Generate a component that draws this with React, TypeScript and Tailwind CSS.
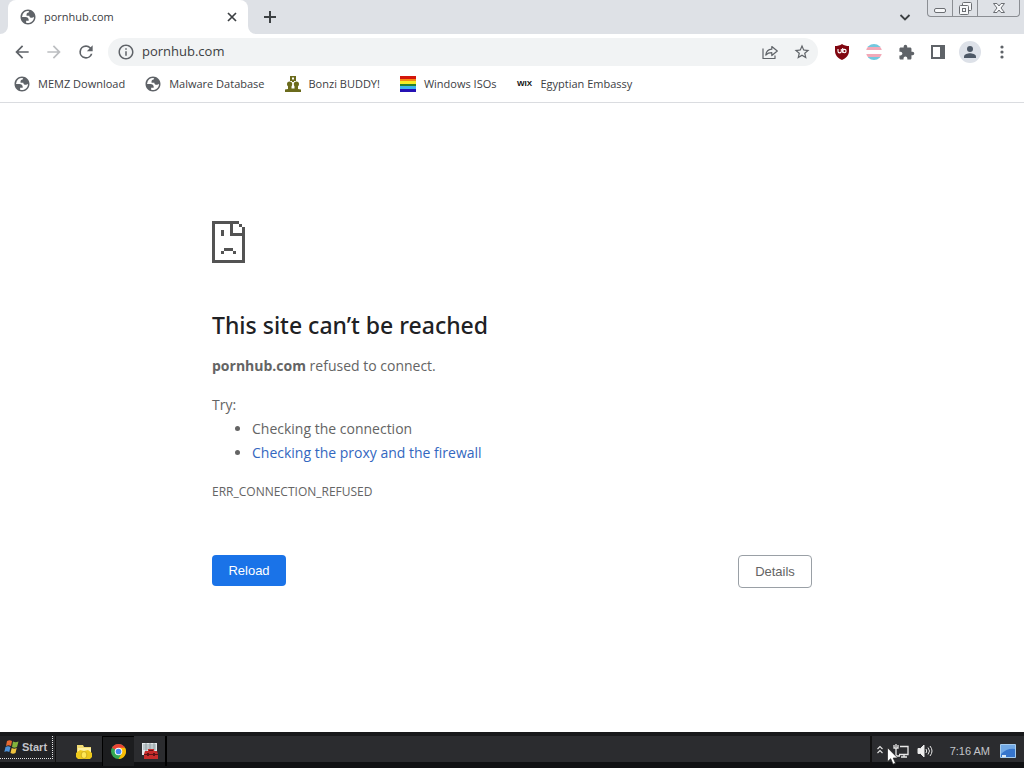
import type { ReactNode } from "react";

const GLOBE =
  "M12 2C6.480 2 2 6.480 2 12s4.480 10 10 10 10-4.480 10-10S17.520 2 12 2zM4 12h4.400c3.407.022 4.922 1.730 4.543 5.127H9.488v2.470a8.004 8.004 0 0 0 10.498-8.083C19.327 12.504 18.332 13 17 13c-2.137 0-3.206-.916-3.206-2.750h-3.748c-.274-2.728.683-4.092 2.870-4.092 0-.975.327-1.597.811-1.970A8.004 8.004 0 0 0 4 12z";

function Icon({ d, className }: { d: string; className?: string }) {
  return (
    <svg viewBox="0 0 24 24" className={className ?? "size-5"} fill="currentColor" aria-hidden="true">
      <path d={d} fillRule="evenodd" />
    </svg>
  );
}

function Globe() {
  return <Icon d={GLOBE} className="-mx-px size-[18px] shrink-0 text-[#5f6368]" />;
}

function ToolButton({ label, children, className }: { label: string; children: ReactNode; className?: string }) {
  return (
    <button type="button" aria-label={label} className={`flex size-8 shrink-0 items-center justify-center rounded-full ${className ?? "text-[#5f6368]"}`}>
      {children}
    </button>
  );
}

function Tab() {
  return (
    <div className="relative ml-2 flex h-[34px] w-60 items-center rounded-t-lg bg-white pr-2 pl-3">
      <svg viewBox="0 0 8 8" className="absolute bottom-0 -left-2 size-2" fill="white"><path d="M8 0v8H0a8 8 0 0 0 8-8z" /></svg>
      <svg viewBox="0 0 8 8" className="absolute -right-2 bottom-0 size-2" fill="white"><path d="M0 0v8h8a8 8 0 0 1-8-8z" /></svg>
      <div className="flex flex-1 items-center gap-2">
        <Globe />
        <span className="text-[11px] text-[#3c4043]">pornhub.com</span>
      </div>
      <button type="button" aria-label="Close tab" className="flex size-4 items-center justify-center text-[#3c4043]">
        <svg viewBox="0 0 16 16" className="size-4" stroke="currentColor" strokeWidth="1.700"><path d="M4 4l8 8M12 4l-8 8" /></svg>
      </button>
    </div>
  );
}

function TabStrip() {
  return (
    <header className="flex h-[34px] bg-[#dee1e6]">
      <Tab />
      <button type="button" aria-label="New tab" className="ml-2 flex w-7 items-center justify-center text-[#3c4043]">
        <svg viewBox="0 0 16 16" className="size-4" stroke="currentColor" strokeWidth="2"><path d="M8 2v12M2 8h12" /></svg>
      </button>
      <button type="button" aria-label="Search tabs" className="ml-auto flex w-7 items-center justify-center text-[#3c4043]">
        <svg viewBox="0 0 16 16" className="size-4" fill="none" stroke="currentColor" strokeWidth="1.800"><path d="M3.500 6L8 10.500 12.500 6" /></svg>
      </button>
      <div className="mr-1 ml-2 flex h-[17px] divide-x divide-[#8b8e93] rounded-b border border-t-0 border-[#8b8e93] text-[#6b6e73]">
        <button type="button" aria-label="Minimize" className="flex w-[25px] justify-center">
          <svg viewBox="0 0 24 16" className="h-4 w-6" fill="#f7f8fa" stroke="currentColor"><rect x="6.500" y="8.500" width="11" height="4" rx="1.500" /></svg>
        </button>
        <button type="button" aria-label="Restore" className="flex w-[25px] justify-center">
          <svg viewBox="0 0 24 16" className="h-4 w-6" fill="#f7f8fa" stroke="currentColor">
            <rect x="9.500" y="2.500" width="9" height="8" rx="1" /><rect x="6.500" y="5.500" width="9" height="9" rx="1" /><rect x="9.500" y="8.500" width="3" height="3" />
          </svg>
        </button>
        <button type="button" aria-label="Close" className="flex w-[41px] justify-center">
          <svg viewBox="0 0 24 16" className="h-4 w-6" fill="#f7f8fa" stroke="currentColor">
            <path d="M6.500 3.500h3.500l2 2.500 2-2.500h3.500l-3.500 4.500 3.500 4.500h-3.500l-2-2.500-2 2.500H6.500L10 8z" />
          </svg>
        </button>
      </div>
    </header>
  );
}

function Toolbar() {
  return (
    <div className="flex h-9 items-center bg-white px-1.5">
      <ToolButton label="Back"><Icon d="M20 11H7.830l5.590-5.590L12 4l-8 8 8 8 1.410-1.410L7.830 13H20v-2z" /></ToolButton>
      <ToolButton label="Forward" className="text-[#bcbec1]"><Icon d="M12 4l-1.410 1.410L16.170 11H4v2h12.170l-5.580 5.590L12 20l8-8z" /></ToolButton>
      <ToolButton label="Reload page"><Icon d="M17.650 6.350A7.958 7.958 0 0 0 12 4a8 8 0 1 0 7.730 10h-2.080A6 6 0 1 1 12 6c1.660 0 3.140.69 4.220 1.780L13 11h7V4l-2.350 2.350z" /></ToolButton>
      <div className="ml-1.5 flex h-7 flex-1 items-center rounded-full bg-[#f1f3f4] pl-[9px]">
        <Icon d="M11 7h2v2h-2zm0 4h2v6h-2zm1-9C6.480 2 2 6.480 2 12s4.480 10 10 10 10-4.480 10-10S17.520 2 12 2zm0 18c-4.410 0-8-3.590-8-8s3.590-8 8-8 8 3.590 8 8-3.590 8-8 8z" className="size-[18px] shrink-0 text-[#5f6368]" />
        <input aria-label="Address and search bar" defaultValue="pornhub.com" className="ml-[5px] w-full min-w-0 flex-1 bg-transparent px-0.5 text-[13px] text-[#3c4043] outline-none" />
        <ToolButton label="Share this page">
          <svg viewBox="0 0 18 18" className="size-[18px]" fill="none" stroke="currentColor" strokeWidth="1.200" strokeLinejoin="round">
            <path d="M2 5.500v10h12V12.500M4.800 12c.4-3.600 2.500-5.600 6-5.800V3.500L16.300 8l-5.500 4.500V9.700c-2.600 0-4.400.6-6 2.300z" />
          </svg>
        </ToolButton>
        <ToolButton label="Bookmark this page">
          <Icon className="size-[18px]" d="M22 9.240l-7.190-.62L12 2 9.190 8.630 2 9.240l5.460 4.730L5.820 21 12 17.270 18.180 21l-1.630-7.030L22 9.240zM12 15.400l-3.760 2.270 1-4.280-3.320-2.880 4.380-.38L12 6.100l1.710 4.040 4.380.38-3.320 2.880 1 4.280L12 15.400z" />
        </ToolButton>
      </div>
      <div className="ml-2 flex">
        <ToolButton label="uBlock Origin">
          <svg viewBox="0 0 16 16" className="size-4">
            <path d="M8 0c2 1.500 4.500 2 7 2v5c0 4.500-3 7-7 9-4-2-7-4.500-7-9V2c2.500 0 5-.5 7-2z" fill="#800610" />
            <path d="M4 5v2.200a1.600 1.600 0 0 0 3.300 0V5M8.700 4v4.800" fill="none" stroke="#fff" strokeWidth="1.100" />
            <circle cx="10.400" cy="7.100" r="1.700" fill="none" stroke="#fff" strokeWidth="1.100" />
          </svg>
        </ToolButton>
        <ToolButton label="Flag extension">
          <span className="flex size-4 flex-col overflow-hidden rounded-full">
            <span className="flex-1 bg-[#72c8de]" /><span className="flex-1 bg-[#f2a9b8]" /><span className="flex-1 bg-white" /><span className="flex-1 bg-[#f2a9b8]" /><span className="flex-1 bg-[#72c8de]" />
          </span>
        </ToolButton>
        <ToolButton label="Extensions">
          <Icon className="size-[17px]" d="M20.500 11H19V7c0-1.100-.9-2-2-2h-4V3.500a2.500 2.500 0 0 0-5 0V5H4c-1.100 0-1.990.9-1.990 2v3.800H3.500c1.490 0 2.700 1.210 2.700 2.700s-1.210 2.700-2.700 2.700H2V20c0 1.100.9 2 2 2h3.800v-1.500c0-1.490 1.210-2.700 2.700-2.700s2.700 1.210 2.700 2.700V22H17c1.100 0 2-.9 2-2v-4h1.500a2.500 2.500 0 0 0 0-5z" />
        </ToolButton>
        <ToolButton label="Side panel">
          <svg viewBox="0 0 14 14" className="size-3.5" fill="currentColor"><path fillRule="evenodd" d="M0 0h14v14H0zM2 2v10h7V2z" /></svg>
        </ToolButton>
        <ToolButton label="Profile">
          <svg viewBox="0 0 22 22" className="size-[22px]" fill="#4d5866">
            <circle cx="11" cy="11" r="11" fill="#dde1e8" /><circle cx="11" cy="8" r="3" /><path d="M5 17v-1.500c0-2.200 4-3.300 6-3.300s6 1.100 6 3.300V17z" />
          </svg>
        </ToolButton>
        <ToolButton label="Menu">
          <svg viewBox="0 0 16 16" className="size-4" fill="currentColor"><circle cx="8" cy="3" r="1.600" /><circle cx="8" cy="8" r="1.600" /><circle cx="8" cy="13" r="1.600" /></svg>
        </ToolButton>
      </div>
    </div>
  );
}

function BuddyIcon() {
  return (
    <svg viewBox="0 0 16 16" className="size-4 shrink-0" fill="#6b6b1c">
      <path fillRule="evenodd" d="M5 0h6v5H9v1H7V5H5zM7 1.500v2h2v-2z" />
      <circle cx="4.600" cy="8" r="2.600" /><circle cx="11.400" cy="8" r="2.600" />
      <path d="M3 9h3.500v3.500h3V9H13v4l3 .5V16H0v-2.500l3-.5z" />
    </svg>
  );
}

function RainbowIcon() {
  return (
    <span className="flex size-4 shrink-0 flex-col">
      <span className="h-[3px] bg-[#d3150b]" /><span className="h-0.5 bg-[#f58a16]" /><span className="h-[3px] bg-[#f5ec25]" /><span className="h-0.5 bg-[#28802c]" /><span className="h-[3px] bg-[#3db5ee]" /><span className="h-[3px] bg-[#2511b4]" />
    </span>
  );
}

const bookmarks: { label: string; icon: ReactNode }[] = [
  { label: "MEMZ Download", icon: <Globe /> },
  { label: "Malware Database", icon: <Globe /> },
  { label: "Bonzi BUDDY!", icon: <BuddyIcon /> },
  { label: "Windows ISOs", icon: <RainbowIcon /> },
  {
    label: "Egyptian Embassy",
    icon: <span aria-hidden="true" className="flex w-4 shrink-0 justify-center font-['Liberation_Sans',sans-serif] text-[8px] font-bold text-[#111]">WIX</span>,
  },
];

function BookmarksBar() {
  return (
    <nav aria-label="Bookmarks" className="flex h-[33px] items-center gap-5 border-b border-[#dadce0] bg-white px-3.5 pb-1">
      {bookmarks.map((b) => (
        <a key={b.label} href="#" className="flex items-center gap-2 text-[11px] whitespace-nowrap text-[#3c4043]">
          {b.icon}
          {b.label}
        </a>
      ))}
    </nav>
  );
}

function ErrorPage() {
  return (
    <main className="flex-1 bg-white px-6 pt-[118px] pb-10">
      <div className="mx-auto max-w-[600px] text-sm leading-6 text-[#646464]">
        <svg viewBox="0 0 11 14" className="h-[42px] w-[33px]" fill="#535353" shapeRendering="crispEdges" aria-hidden="true">
          <path d="M0 0h9v1H1v12h9V5H6V1h1v3h3V2h1v12H0zM9 1h1v1H9zM3 3h1v2H3zM4 9h3v1H4zM3 10h1v1H3zM7 10h1v1H7z" />
        </svg>
        <h1 className="mt-[47px] font-['Noto_Sans','Open_Sans',sans-serif] text-[23px] leading-[30px] font-medium text-[#202124]">This site can’t be reached</h1>
        <p className="mt-3.5"><strong className="font-bold">pornhub.com</strong> refused to connect.</p>
        <p className="mt-[15px]">Try:</p>
        <ul className="list-disc pl-10">
          <li>Checking the connection</li>
          <li><a href="#" className="text-[#3367c0]">Checking the proxy and the firewall</a></li>
        </ul>
        <p className="mt-[15px] text-xs leading-6">ERR_CONNECTION_REFUSED</p>
        <div className="mt-[51px] flex items-start justify-between font-['Liberation_Sans',sans-serif] text-[13px]">
          <button type="button" className="h-[31px] min-w-[74px] rounded bg-[#1a73e8] px-4 text-white">Reload</button>
          <button type="button" className="h-[33px] min-w-[74px] rounded border border-[#9aa0a6] px-4 text-[#646464]">Details</button>
        </div>
      </div>
    </main>
  );
}

function Taskbar() {
  return (
    <footer className="relative flex h-9 border-t-4 border-b-2 border-t-[#18191b] border-b-[#101113] bg-[linear-gradient(#2b2c2f_26px,#101113_26px)] font-['Liberation_Sans',sans-serif] text-[#c3c5c9]">
      <button type="button" className="flex h-[23px] w-[53px] items-center gap-0.5 border-r border-b border-dotted border-[#e5e5e5] bg-[#222326] pl-1 text-[11px] font-bold">
        <svg viewBox="0 0 16 16" className="size-4 shrink-0">
          <path d="M3 2c2-1 3-1 5 0L7 7C5 6 4 6 2 7z" fill="#e66a32" /><path d="M9 2.500c2 1 3 1 5.500 0L13 8c-2 1-3 1-5 0z" fill="#82b43c" />
          <path d="M1.500 8c2-1 3-1 5 0l-1.200 5c-2-1-3-1-5 0z" fill="#4d91d6" /><path d="M7.700 9c2 1 3 1 5 0l-1.200 5c-2 1-3 1-5 0z" fill="#efc33e" />
        </svg>
        Start
      </button>
      <div className="ml-0.5 flex border-l border-[#111]">
        <button type="button" aria-label="File Explorer" className="ml-3 flex w-8 items-center justify-center">
          <svg viewBox="0 0 16 16" className="size-4">
            <path d="M1 2h6l1 2h7v11H1z" fill="#f2db72" /><path d="M2 5h13v5H2z" fill="#fff0a2" />
            <path d="M0 10l4-3 4 1 4-1 4 3v4l-2 2H2l-2-2z" fill="#edc91c" /><ellipse cx="8" cy="12" rx="2.800" ry="3.500" fill="#ffe855" stroke="#bb9413" strokeWidth=".6" />
          </svg>
        </button>
        <button type="button" aria-label="Google Chrome" className="ml-0.5 flex w-8 items-center justify-center border-t border-l border-black bg-[#1c1d1f]">
          <svg viewBox="0 0 16 16" className="size-[15px]">
            <circle cx="8" cy="8" r="8" fill="#34a853" /><path d="M8 8L1.070 4A8 8 0 0 1 14.930 4z" fill="#ea4335" /><path d="M8 4h6.930A8 8 0 0 1 8 16l3.460-6z" fill="#fbbc05" />
            <circle cx="8" cy="8" r="4" fill="#fff" /><circle cx="8" cy="8" r="3" fill="#4285f4" />
          </svg>
        </button>
        <button type="button" aria-label="Toolbox" className="flex w-[33px] items-center justify-center border-r-2 border-black">
          <svg viewBox="0 0 16 16" className="size-4">
            <path d="M0 0h15v12H0z" fill="#e5e9ec" /><path d="M1 2h13M1 4h13M1 6h13M4 0v8M8 0v8M12 0v8" stroke="#87949b" strokeWidth=".8" />
            <path d="M3 8h3V6h6v2h3l1 3v5H2v-5z" fill="#c82c2b" /><path d="M7 8V7h4v1zM2 11h14v1H2zM5 10h2v3H5zM11 10h2v3h-2z" fill="#5f1518" />
          </svg>
        </button>
      </div>
      <div className="ml-auto flex items-center border-l-2 border-[#111] pr-2">
        <button type="button" aria-label="Show hidden icons" className="flex w-4 justify-center">
          <svg viewBox="0 0 8 12" className="h-3 w-2" fill="none" stroke="#e4e4e4" strokeWidth="1.100"><path d="M1.500 4L4 1.500 6.500 4M1.500 8L4 5.500 6.500 8" /></svg>
        </button>
        <svg viewBox="0 0 16 16" className="ml-[5px] size-4" fill="none" stroke="#e8e8e8" strokeWidth="1.300"><path d="M7 3.500h8v8H6M8 14h6M11 12v2M3 1v3M1 2v3h4V2M3 5v8h4" /></svg>
        <svg viewBox="0 0 16 16" className="ml-2 size-4" fill="none" stroke="#e8e8e8" strokeWidth="1"><path d="M1 5.500h2.500L7 2v12L3.500 10.500H1z" fill="#eee" /><path d="M9 6q1.500 2 0 4M11 4.500q3 3.500 0 7M13 3q4 5 0 10" /></svg>
        <time className="ml-[17px] text-[11px]">7:16 AM</time>
        <svg viewBox="0 0 16 14" className="ml-2.5 h-3.5 w-4"><path d="M.5.5h15v13H.5z" fill="#3675cc" stroke="#a5cbed" /><path d="M1 1h14v4Q7 4 1 10z" fill="#72a9e5" /><path d="M2 11h4v2H2z" fill="#d9e8f5" /></svg>
      </div>
      <svg viewBox="0 0 12 18" className="pointer-events-none absolute top-[11px] right-[125px] h-[18px] w-3"><path d="M.5.700v14l3.200-3 2.300 5.500 2.500-1-2.300-5.200h4.500z" fill="#fff" stroke="#222" strokeWidth=".7" /></svg>
    </footer>
  );
}

export default function App() {
  return (
    <div className="flex min-h-screen flex-col bg-white font-['Open_Sans','Noto_Sans',sans-serif]">
      <TabStrip />
      <Toolbar />
      <BookmarksBar />
      <ErrorPage />
      <Taskbar />
    </div>
  );
}
